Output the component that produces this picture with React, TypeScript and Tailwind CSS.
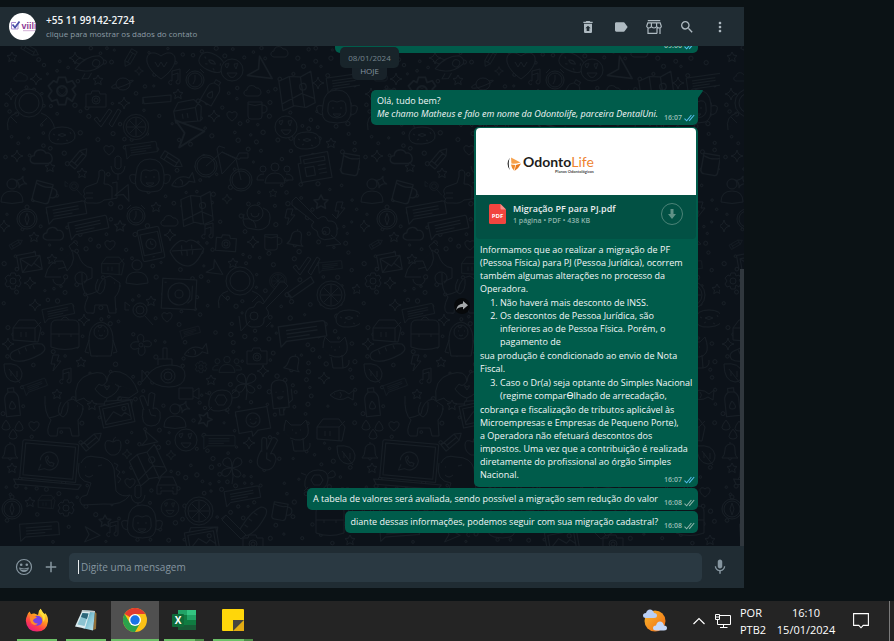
import React from 'react';
import { MdAdd, MdLabel, MdMic, MdMoreVert, MdRestoreFromTrash, MdSearch } from 'react-icons/md';

type Doodle = [kind: string, x: number, y: number, rotate?: number, scale?: number];

const shapes: Record<string, string> = {
  star: 'M0-5 1.6-1.8 5-1.4 2.5 1 3.2 4.6 0 2.8-3.2 4.6-2.5 1-5-1.4-1.6-1.8Z',
  spark: 'M0-6Q.8-.8 6 0 .8.8 0 6-.8.8-6 0-.8-.8 0-6Z',
  heart: 'M0 5C-9-1-4-7 0-3 4-7 9-1 0 5Z',
  bigHeart: 'M0 15C-24-2-13-18 0-8 13-18 24-2 0 15M-6-2l3 5 3-5 3 5 3-5',
  cloud: 'M-6 5C-11 4-9-1-6-1-6-6 1-7 3-3 8-4 10 4 5 5Z',
  planet: 'M-7 0a7 6 0 1 1 14 0a7 6 0 1 1-14 0M-7 0C-16 4-10 6 0 2S14-5 6-3',
  camera: 'M-10-6h5l1-3h7l1 3h6v13h-20ZM-4 0a4 4 0 1 0 8 0a4 4 0 1 0-8 0M-2 0a2 2 0 1 0 4 0a2 2 0 1 0-4 0',
  pencil: 'M-11-4H6l6 4-6 4H-11ZM-7-4v8M6-4v8M-7 0H6',
  bubble: 'M-19-7H18a2 2 0 0 1 2 2V6H-14l-5 4ZM-13-3H13M-13 0H13M-13 3H6',
  envelope: 'M-10-6H10V8H-10ZM-10-6 0 3 10-6M-10 8l7-7M10 8 3 1M-13 4v-14H6v4',
  laptop: 'M-26-22H26a2 2 0 0 1 2 2V16H-28V-20a2 2 0 0 1 2-2ZM-25-19H25V13H-25ZM-34 18H34l-3 5H-31ZM-9-3a9 9 0 1 1 5 8l-6 2 2-6M-4-6c1 6 4 8 8 8l1-3-3-1-1 1-3-3 1-2-1-2Z',
  phone: 'M-9-16H9a2 2 0 0 1 2 2V14a2 2 0 0 1-2 2H-9a-2 2 0 0 1-2-2V-14a-2 2 0 0 1 2-2ZM-9-11H9V10H-9ZM-5 0a5 5 0 1 0 10 0a5 5 0 1 0-10 0M0-3V0L2 1M-1 13h2',
  cup: 'M-8-7H6V7q0 3-3 3H-5q-3 0-3-3ZM6-4q5 0 5 4t-5 4M-8-5q7 3 14 0',
  bell: 'M-8 6Q-5 3-5-2T0-8 5-2 8 6ZM-2 6q2 4 4 0M0-8v-2',
  wheel: 'M-14 0a14 14 0 1 0 28 0a14 14 0 1 0-28 0M-11 0a11 11 0 1 0 22 0a11 11 0 1 0-22 0M0-10V10M-10 0H10M-7-7 7 7M7-7-7 7',
  compass: 'M-10 0a10 10 0 1 0 20 0a10 10 0 1 0-20 0M-8 0a8 8 0 1 0 16 0a8 8 0 1 0-16 0M0-6 2 0 0 6-2 0ZM-2-12a2 2 0 1 0 4 0a2 2 0 1 0-4 0',
  clock: 'M-9 0a9 9 0 1 0 18 0a9 9 0 1 0-18 0M-7 0a7 7 0 1 0 14 0a7 7 0 1 0-14 0M0-5V0L-2 4M-9-7l4-4M9-7 5-11',
  face: 'M-11 0a11 11 0 1 0 22 0a11 11 0 1 0-22 0M-6-3q-2-4 1-3 3-2 1 2l-1 2ZM3-3q-2-4 1-3 3-2 1 2L4-1ZM-5 3H5Q2 9-2 7Z',
  plane: 'M-8-7 8-1-6 8-3 0Z',
  bolt: 'M-3-8H3L1-2H5L-3 8-1 1H-5Z',
  drop: 'M0-5Q8 5 0 5T0-5',
  person: 'M-5-8a5 5 0 1 0 10 0a5 5 0 1 0-10 0M-11 10Q-11-1 0-1T11 10Q0 13-11 10Z',
  group: 'M-4-8a4 4 0 1 0 8 0a4 4 0 1 0-8 0M-10 8Q-9-2 0-2T10 8ZM-15-6a3 3 0 1 0 6 0a3 3 0 1 0-6 0M9-6a3 3 0 1 0 6 0a3 3 0 1 0-6 0M-11 5h-7q0-6 7-6M11 5h7q0-6-7-6',
  gear: 'M-2-8H2L3-5 6-6 8-3 6-1 8 2 6 6 3 4 2 8H-2L-3 5-6 6-8 3-6 0-8-3-5-6-3-5ZM-3 0a3 3 0 1 0 6 0a3 3 0 1 0-6 0',
  flower: 'M-2-3C-8-12 6-14 2-3 12-8 14 5 3 1 8 12-6 14-2 3-12 8-14-5-2-3M-2 0a2 2 0 1 0 4 0a2 2 0 1 0-4 0',
  bike: 'M-27 4a11 11 0 1 0 22 0a11 11 0 1 0-22 0M-25 4a9 9 0 1 0 18 0a9 9 0 1 0-18 0M8 18a11 11 0 1 0 22 0a11 11 0 1 0-22 0M10 18a9 9 0 1 0 18 0a9 9 0 1 0-18 0M-16 4 0-10 14-3 0 12-5-13-3-16 3-14M14-3l5 21M14-3l3-6h9v5h-8M0-10 16-3',
  scooter: 'M-23 13q4-18 18-16l4 10q12-12 2-25l5-4 4 4M4-14l6 4Q14 3 24 4v10l-9 4M-23 13h16M-15 15a6 6 0 1 0 12 0M7 14a6 6 0 1 0 12 0a6 6 0 1 0-12 0M-10 5l8-2',
  thumb: 'M-11-1 0-5Q3-12 2-17q5-3 6 3L7-4q4-1 8 3v12l-8 1Q3 16-4 15h-6q-4-2-1-4-4-2-1-5-3-3 1-7M-11 5h7M-11 10h7M15-5l5-1v16l-5 1',
  bottle: 'M-3-14h6v4q4 3 4 7v17H-7V-3q0-4 4-7ZM-3-10h6M0-1q6 8 0 8T0-1',
  box: 'M-13 9V-3l6-8H9l6 8-3 14ZM-13-3H9l6-6M9-3v14M-5 1v5M0 1v5',
  note: 'M-4 6a2 2 0 1 1 0-3v-10l8-2V4a2 2 0 1 1-2-2v-7l-6 2',
  fish: 'M-10 0Q0-9 9-1L14-5 13 5 8 2Q-1 8-10 0M-6-1h1M0-3q3 3 0 6',
  car: 'M-10 8V0l4-9H6l4 9v8H6V5H-6v3ZM-9-1H9M-7 2h2M5 2h2',
  apple: 'M0-5q8-5 8 3T2 8H-2Q-8 5-8-2T0-5M0-5q0-4 3-5',
  dino: 'M-19-12q4-9 15-6 15 0 18 12l2 22q6 7 14 4Q22 31 4 29l-22 1q-6-8 5-10l4-12q-16-2-12-20M-15-8h1M-2-9l4-1M-15 0q4 4 8 0M14-12l4 2-2 4 4 3-3 4 4 3-3 4',
  dog: 'M-20-22q-1 18 6 24-6 12-1 16h7l1-8H5l2 8h7l-1-16Q18-3 18-12L8-19Q-2-18-4-4-10-1-16 0M-4-16q-6 12 2 15Q4-4 3-16M12-12h1M17-9h2',
  monkey: 'M-14-4Q-13-19 0-19T14-4 8 13-8 13-14-4M-9-2q0-9 9-5 9-4 9 5 2 10-9 11-11-1-9-11M-4-2v2M4-2v2M-4 5q4 5 8 0ZM-14-3q-8-2-6 4t6 4M14-3q8-2 6 4t-6 4',
  bread: 'M-17 4Q-21-3-10-5 4-10 15-7q6 6-3 10Q-9 11-17 4M-9-4l1 4M-2-6l1 4M6-7l1 4',
  hands: 'M-31 16q-3-22 14-27Q-1-16 0-4q-4 7-8 3L-12 4q6 8 12 9L-2 19h-9q-10-2-12-6ZM31 7q-5-16-18-20Q1-16 0-4M8-1l4 3Q10 9 0 13M31 7l-9 6-9-1Q6 20-2 19M0 5q-5-7 0-3 5-4 0 3',
  map: 'M-15-12-5-15 5-13 15-17V12L6 15-4 12-15 15ZM-5-15V12M5-13V15M-15 9 4 2 15 8M3-4a3 3 0 1 0 6 0a3 3 0 1 0-6 0',
  lips: 'M-17-2Q-6-16 0-10 6-16 17-2 8 15 0 14-11 13-17-2M-15-2H15M-6-2l1 5M0-2v6M6-2 5 3M-5-7v4M5-7v4',
  picture: 'M-16-11H16V11H-16ZM-13-8H13V8H-13ZM-13 6-3-3 4 3 8 0l5 5M6-4a2 2 0 1 0 4 0a2 2 0 1 0-4 0M-11-11l2-4 27 4-2 6',
  turntable: 'M-17-15H17V15H-17ZM-11 0a11 11 0 1 0 22 0a11 11 0 1 0-22 0M-4 0a4 4 0 1 0 8 0a4 4 0 1 0-8 0M13-9v14l-4 4M-15-11h2',
  rose: 'M-9-4a8 8 0 1 0 16 0a8 8 0 1 0-16 0M-5-4a4 4 0 1 0 8 0M-12-3Q-16 12-3 12 8 15 13 7 17-6 7-9M-12 2Q-1 0 0 11',
  guitar: 'M-26-22l4-4 22 22Q7-10 10-2q9-1 9 8 1 10-7 10Q0 19-1 8-10 4-4-1L-26-18ZM4 8a4 4 0 1 0 8 0a4 4 0 1 0-8 0M13 12l10 9-15 2M14-9l5 5',
  news: 'M-13-13H15V13H-16V-6h3ZM-10-9H11V-5H-10ZM-10-1H-1V8H-10ZM3-1h8M3 3h8M3 7h8',
  astronaut: 'M-14-4a14 14 0 1 1 28 0a14 14 0 1 1-28 0M-10-4a10 10 0 1 1 20 0a10 10 0 1 1-20 0M-12 6q-12 3-9 17M12 6q12 4 14 17M-18 10l6 6M18 11l-6 6',
  rocket: 'M-14 13Q-12-5 2-13q8 0 8 6Q5 8-9 12ZM-9-1l-7 1-4 7 7-1M4 8v7l-6 4v-7M-1-4a4 4 0 1 0 8 0a4 4 0 1 0-8 0',
  donut: 'M-13 0Q-12-8 0-8T13 0 0 9-13 0M-4 0q4-3 8 0-4 3-8 0M-9-1l2 1M8-3l1 2M-5 5l2-1M4 5l2 1',
  bag: 'M-14 13V-8q0-6 6-6H8q6 0 6 6V13Q0 18-14 13M-14 0H14M-4-14q4-6 8 0M-6 0v3M6 0v3',
  penguin: 'M-10 15Q-17-16 0-19 17-16 10 15ZM-7-9a7 7 0 1 0 14 0a7 7 0 1 0-14 0M-3-10h1M3-10h1M-2-6q2 2 4 0M-12-1l-4 12 4 1M12-1l4 12-4 1',
  submarine: 'M-19 2Q-12-9 4-9T19 2 3 13-19 2M-8-9v-6H6v6M-3-15v-11H1v11M-5 2a7 7 0 1 0 14 0a7 7 0 1 0-14 0M-2 2a4 4 0 1 0 8 0a4 4 0 1 0-8 0M-19 2l-5-6v12Z',
  peace: 'M-8-2q-3 17 8 17T9 1Q5-5 2-2L4-17q-4-3-6 0l-1 12-4-10q-5-1-4 3l4 11M-2-2 0 4l5 1',
  turtle: 'M-11 1Q-9-10 2-10T12 0-1 11-11 1M-5 0l3-5h6l3 5-3 5h-6ZM12-6q5-6 7-1t-7 5M-10-5l-5-2M-8 7l-4 4M6 9l3 5',
  ice: 'M-8 12V-8q0-8 8-8t8 8V12ZM-2 12v7h4v-7M-4-4h1M3-4h1M-3 1H3Q0 5-3 1M8 8l4-3V-6',
  cat: 'M-12-2q0-6 2-11l5 5H5l5-5q4 11 1 16-5 7-17 2M-4-3h1M4-3h1M-1 0h2M-4 7-2 18H8L7 5M8 18q7-1 6-8',
  clover: 'M0 0Q-13-2-8-9 0-14 0 0 2-14 9-9 13-2 0 0 13 4 7 9 0 10 0 0-4 12-10 7-12 0 0 0M0 0Q2 9 0 16',
  video: 'M-9-5H5V6H-9ZM5-1l6-4V6L5 3',
  ticket: 'M-16-11H16V11H3L-3 16V11H-16ZM-7 0a7 7 0 1 0 14 0a7 7 0 1 0-14 0M-3-1h1M3-1h1M-3 2Q0 6 3 2',
  magnifier: 'M-7-3a7 7 0 1 0 14 0a7 7 0 1 0-14 0M-4-3a4 4 0 1 0 8 0a4 4 0 1 0-8 0M5 3l8 9M-10-7l-5-4v8h4',
  ticks: 'M-12 1l3-2 3 5L3-9l3 2L-5 9ZM3 6l9-15 3 2L6 9Z',
  leaf: 'M-9-9Q7-11 9 0q0 9-7 9Q-9 8-9-9M-4-4l11 14M-2 3v-5M4 4V-2',
  mic: 'M-3-10q3-4 6 0v9q-3 4-6 0ZM-7-2q1 8 7 8t7-8M0 6v6',
  milk: 'M-12 3 8-17l4 5-19 19ZM-12 3l4 5',
};

const doodles: Doodle[] = [
  ['star', 12, 57], ['pencil', 30, 50, 30, 0.8], ['rocket', 92, 65, 30, 0.9], ['pencil', 130, 58, 120, 0.8], ['bigHeart', 161, 64],
  ['donut', 212, 62, 30], ['face', 232, 70], ['plane', 262, 72, 40, 1.5], ['cloud', 280, 52], ['spark', 75, 58], ['cloud', 21, 77, 0, 0.8],
  ['spark', 36, 79], ['gear', 62, 91, 0, 1.7], ['heart', 62, 91, 0, 0.8], ['star', 98, 80], ['planet', 123, 84], ['note', 176, 78], ['clock', 195, 80],
  ['bottle', 212, 92, 30, 0.9], ['spark', 139, 71, 0, 0.7], ['cloud', 253, 91], ['camera', 96, 100], ['spark', 11, 94], ['astronaut', 29, 107],
  ['milk', 154, 103, 40], ['star', 178, 94], ['spark', 124, 103], ['box', 187, 112, -10], ['cup', 256, 109], ['face', 286, 127],
  ['ticks', 106, 118], ['spark', 214, 116], ['wheel', 136, 127, 0, 0.9], ['heart', 232, 116], ['donut', 62, 135], ['plane', 190, 133, 0, 1.8],
  ['map', 297, 92, -8, 1.1], ['bubble', 344, 82, -8, 0.9], ['spark', 318, 83], ['monkey', 337, 109], ['donut', 307, 140], ['star', 331, 143],
  ['cloud', 42, 157, 0, 1.3], ['heart', 109, 150], ['bubble', 141, 149, -8, 0.8], ['spark', 17, 156], ['pencil', 79, 158, -50], ['star', 50, 167], ['star', 82, 173],
  ['mic', 118, 168], ['pencil', 172, 160, 32], ['monkey', 150, 178], ['bike', 222, 162], ['group', 275, 175], ['news', 315, 167, -10], ['cup', 352, 163, 10, 1.2],
  ['thumb', 97, 188], ['person', 12, 192], ['spark', 21, 182, 20], ['cup', 44, 191, 15, 1.2], ['magnifier', 74, 188, 0, 0.6], ['plane', 125, 192, -60],
  ['bubble', 66, 211, -10], ['bubble', 88, 226, -12], ['fish', 181, 182, -20], ['map', 197, 210, -6], ['spark', 227, 199, 0, 0.8], ['star', 273, 193, 0, 0.8],
  ['compass', 27, 219], ['clock', 136, 216], ['star', 156, 207], ['star', 120, 226, 0, 1.1], ['cloud', 170, 221], ['rose', 256, 217], ['star', 321, 202, 0, 1.4], ['guitar', 318, 223],
  ['bolt', 290, 217], ['bolt', 340, 210], ['spark', 4, 226], ['star', 34, 237], ['cloud', 54, 234, 0, 1.2], ['pencil', 16, 244, -30, 0.6], ['phone', 151, 244, -12], ['spark', 170, 235],
  ['lips', 187, 252, -4], ['note', 209, 232], ['camera', 226, 244, 4], ['spark', 253, 242], ['cup', 272, 241, 0, 0.9], ['bell', 296, 239, 10], ['heart', 110, 245],
  ['scooter', 68, 264], ['envelope', 31, 263, -10], ['star', 52, 259], ['box', 112, 266, 0, 0.8], ['person', 137, 273], ['plane', 216, 270, 40], ['star', 233, 263],
  ['gear', 13, 281], ['spark', 30, 283], ['turntable', 179, 294, 3], ['astronaut', 240, 285], ['wheel', 278, 281, 0, 0.6], ['ticks', 305, 266], ['bubble', 330, 266, -6, 0.6],
  ['milk', 300, 292, 10], ['person', 331, 295], ['wheel', 331, 295, 0, 1], ['dog', 102, 295], ['magnifier', 140, 313], ['star', 151, 301], ['spark', 35, 305],
  ['bubble', 58, 312, -12, 0.8], ['spark', 84, 320], ['guitar', 262, 308, 90], ['heart', 167, 317], ['star', 357, 289], ['donut', 349, 318],
  ['box', 26, 331], ['bag', 65, 334], ['penguin', 101, 341], ['flower', 141, 345], ['spark', 8, 344], ['bread', 28, 353, -8], ['bolt', 56, 363], ['star', 81, 362],
  ['leaf', 13, 373], ['note', 67, 377], ['bubble', 35, 386, -20, 0.6], ['star', 57, 394], ['bottle', 12, 402, -6], ['hands', 107, 385], ['bubble', 190, 332, -15, 0.5],
  ['fish', 194, 352, -15], ['submarine', 166, 374], ['gear', 201, 367, 0, 0.7], ['group', 227, 366, 0, 0.8], ['camera', 257, 357], ['star', 211, 380], ['video', 188, 393],
  ['bell', 293, 364, 15], ['spark', 263, 371], ['clover', 246, 384], ['ice', 280, 396, -6], ['bubble', 302, 332, -8, 1.2], ['turtle', 220, 400],
  ['dog', 65, 418], ['drop', 6, 425], ['drop', 19, 426], ['heart', 34, 426], ['star', 92, 405], ['picture', 117, 414, -12], ['peace', 151, 411], ['person', 175, 417],
  ['spark', 184, 407, 20], ['star', 205, 419, 20, 1.4], ['ticket', 253, 420, -10], ['cat', 296, 433], ['drop', 13, 434], ['pencil', 92, 441, -40], ['apple', 113, 447],
  ['plane', 150, 440, 20], ['face', 186, 440], ['bubble', 219, 441, 0, 0.8], ['spark', 249, 443], ['peace', 268, 455, 20], ['bell', 10, 452], ['star', 12, 468],
  ['laptop', 49, 464, 5], ['dino', 100, 475], ['spark', 127, 454, 0, 0.8], ['map', 148, 466, -25], ['spark', 171, 455, 0, 0.8], ['heart', 130, 483], ['clover', 232, 468],
  ['car', 167, 486], ['compass', 12, 509], ['star', 30, 502], ['gear', 66, 508], ['box', 46, 502, 0, 0.6], ['mic', 138, 497], ['wheel', 199, 511], ['bubble', 242, 495, -10, 0.9],
  ['cup', 281, 510, 10], ['face', 170, 508, 0, 0.8], ['monkey', 142, 524], ['star', 105, 521, 0, 1.2], ['bubble', 39, 530, -4], ['plane', 92, 535, 10], ['note', 114, 530],
  ['bread', 254, 522, -40], ['milk', 229, 527, 90], ['picture', 202, 541, -10], ['camera', 253, 544], ['cat', 335, 350], ['spark', 324, 378], ['fish', 340, 395],
  ['box', 330, 430], ['leaf', 346, 455], ['turtle', 316, 480], ['heart', 345, 492], ['bag', 330, 520], ['star', 350, 540],
];

// small circles fill whatever room the drawings leave
const dots = (() => {
  const out: { x: number; y: number; r: number }[] = [];
  let seed = 7;
  const next = () => {
    seed = (seed * 16807) % 2147483647;
    return seed / 2147483647;
  };
  for (let i = 0; i < 1500; i++) {
    const x = 3 + next() * 354;
    const y = 48 + next() * 496;
    const far = doodles.every(([, dx, dy]) => Math.hypot(dx - x, dy - y) > 11);
    const free = out.every((d) => Math.hypot(d.x - x, d.y - y) > 7);
    if (far && free) out.push({ x, y, r: 1 + next() * 1.2 });
  }
  return out;
})();

function Wallpaper() {
  return (
    <svg className="absolute inset-0 h-full w-full" aria-hidden="true">
      <defs>
        <pattern id="doodles" width="360" height="500" patternUnits="userSpaceOnUse">
          <g transform="translate(0 -46)" fill="#0c1219" stroke="#171e25" strokeWidth="1" strokeLinejoin="round">
            {dots.map((d, i) => (
              <circle key={i} cx={d.x} cy={d.y} r={d.r} />
            ))}
            {doodles.map(([kind, x, y, rotate = 0, scale = 1], i) => (
              <path key={i} d={shapes[kind]} transform={`translate(${x} ${y}) rotate(${rotate}) scale(${scale})`} />
            ))}
          </g>
        </pattern>
      </defs>
      <rect width="100%" height="100%" fill="url(#doodles)" />
    </svg>
  );
}

function Ticks({ read }: { read?: boolean }) {
  return (
    <svg
      viewBox="0 0 11 8"
      className={`h-2 w-[11px] ${read ? 'text-[#53bdeb]' : 'text-[#8fb5ab]'}`}
      fill="none"
      stroke="currentColor"
      strokeWidth="1.1"
    >
      <path d="M.5 4.6 2.7 6.8 7.4 1M5.2 6.8 10.2 1" />
    </svg>
  );
}

function Stamp({ time, read }: { time: string; read?: boolean }) {
  return (
    <span className="flex items-center gap-[2px] text-[7px] font-semibold leading-[8px] text-[#99beb7]">
      {time}
      <Ticks read={read} />
    </span>
  );
}

function Bubble({ time, read, tail, children }: { time: string; read?: boolean; tail?: boolean; children: React.ReactNode }) {
  return (
    <div
      className={`relative flex items-end gap-[6px] bg-[#005c4b] pt-1 pr-[3px] pb-[3px] pl-[6px] ${
        tail ? 'rounded-b-[5px] rounded-tl-[5px]' : 'rounded-[5px]'
      }`}
    >
      <div className="pb-[2px]">{children}</div>
      <Stamp time={time} read={read} />
      {tail && (
        <svg viewBox="0 0 5 8" className="absolute top-0 left-full h-2 w-[5px]">
          <path d="M0 0H4.2Q5.4.4 4.6 1.4L0 8Z" fill="#005c4b" />
        </svg>
      )}
    </div>
  );
}

function OdontoLogo() {
  return (
    <div className="flex items-center gap-[1px] pl-[30px] pt-1">
      <svg viewBox="0 0 16 18" className="h-[18px] w-4">
        <path d="M3.600 3Q-.6 9 3.800 15 1.800 9 3.600 3Z" fill="#222" />
        <path d="M5 2.500 14.500 7.500Q9.500 9 5.400 8.600Z" fill="#f6a04a" />
        <path d="M15 8.500Q13 13 8.500 16L10 10Z" fill="#e8791c" />
        <path d="M5 9.500 9.300 10 8 15.500Q5.500 13 5 9.500Z" fill="#f28c2c" />
      </svg>
      <div className="flex flex-col items-end font-['Lato',sans-serif]">
        <div className="text-[14px] font-bold leading-[15px] text-[#1d1d1b]">
          Odonto<span className="font-normal text-[#ee8330]">Life</span>
        </div>
        <div className="text-[4px] font-bold leading-[5px] text-[#444]">Planos Odontológicos</div>
      </div>
    </div>
  );
}

function DocumentMessage() {
  return (
    <div className="relative w-[224px] rounded-[5px] bg-[#005c4b] pt-px pb-[6px]">
      <div className="mx-[2px] overflow-hidden rounded-[4px] bg-[#025144]">
        <div className="flex h-[67px] items-center bg-white">
          <OdontoLogo />
        </div>
        <div className="flex h-[44px] items-center gap-[7px] pr-[13px] pb-[6px] pl-[13px]">
          <svg viewBox="0 0 17 20" className="h-5 w-[17px] font-['Open_Sans',sans-serif]">
            <path d="M1.500 0H11.500L17 5.500V18.500Q17 20 15.500 20H1.500Q0 20 0 18.500V1.500Q0 0 1.500 0Z" fill="#f2453f" />
            <path d="M11.500 0 17 5.500H12.500Q11.500 5.500 11.500 4.500Z" fill="#f98e88" />
            <text x="8.5" y="14" textAnchor="middle" fontSize="6" fontWeight="700" fill="#fff">PDF</text>
          </svg>
          <div className="flex-1">
            <div className="text-[9px] font-semibold leading-[13px] text-[#e9edef]">Migração PF para PJ.pdf</div>
            <div className="pt-px text-[7px] font-semibold leading-[10px] text-[#8db5ac]">1 página • PDF • 438 KB</div>
          </div>
          <button aria-label="Baixar" className="flex h-[22px] w-[22px] items-center justify-center rounded-full border border-[#4b8377] text-[#5f9186]">
            <svg viewBox="0 0 10 10" className="h-[10px] w-[10px]" fill="currentColor">
              <path d="M3.500 0H6.500V5H9L5 10 1 5H3.500Z" />
            </svg>
          </button>
        </div>
      </div>
      <div className="flex flex-col gap-px pt-1 pr-1 pl-[6px] text-[9px] font-medium leading-[13px] text-[#f3f6f7]">
        <p>
          Informamos que ao realizar a migração de PF<br />(Pessoa Física) para PJ (Pessoa Jurídica), ocorrem<br />
          também algumas alterações no processo da<br />Operadora.
        </p>
        <ol className="list-decimal pl-5">
          <li>Não haverá mais desconto de INSS.</li>
          <li>Os descontos de Pessoa Jurídica, são<br />inferiores ao de Pessoa Física. Porém, o<br />pagamento de</li>
        </ol>
        <p>sua produção é condicionado ao envio de Nota<br />Fiscal.</p>
        <ol className="list-decimal pl-5 whitespace-nowrap" start={3}>
          <li>Caso o Dr(a) seja optante do Simples Nacional<br />(regime comparƟlhado de arrecadação,</li>
        </ol>
        <p>
          cobrança e fiscalização de tributos aplicável às<br />Microempresas e Empresas de Pequeno Porte),<br />
          a Operadora não efetuará descontos dos<br />impostos. Uma vez que a contribuição é realizada<br />
          diretamente do profissional ao órgão Simples<br />Nacional.
        </p>
      </div>
      <div className="absolute right-[3px] bottom-[3px]">
        <Stamp time="16:07" read />
      </div>
      <button aria-label="Encaminhar" className="absolute top-[171px] right-full mr-1 flex h-4 w-4 items-center justify-center rounded-full bg-[#07090b] text-[#a5a9ab]">
        <svg viewBox="0 0 12 10" className="h-[10px] w-3" fill="currentColor">
          <path d="M7 0 12 4.300 7 8.500V6Q2.500 5.800 0 9.300 1 3.200 7 2.600Z" />
        </svg>
      </button>
    </div>
  );
}

function Header() {
  return (
    <header className="flex h-[39px] items-center bg-[#202c33] pr-4 pl-[9px]">
      <svg viewBox="0 0 27 27" className="h-[27px] w-[27px] font-['Liberation_Sans',sans-serif]">
        <clipPath id="avatar"><circle cx="13.5" cy="13.5" r="13.5" /></clipPath>
        <g clipPath="url(#avatar)">
          <rect width="27" height="27" fill="#fff" />
          <path d="M9 10V16H2.500V9.500H7" fill="none" stroke="#a98bd0" strokeWidth="1" />
          <path d="M3.500 11.500 6 14.500 10.500 8.500" fill="none" stroke="#4a50a8" strokeWidth="1.8" />
          <text x="12.5" y="16" fontSize="9" fontWeight="700" fill="#8f3c97">viili</text>
          <path d="M14 17.700H26" stroke="#c69acb" strokeWidth=".8" />
        </g>
      </svg>
      <div className="ml-[10px] flex-1">
        <h1 className="text-[10px] font-semibold leading-[13px] text-[#f3f6f7]">+55 11 99142-2724</h1>
        <p className="text-[8px] leading-[13px] text-[#8c9ba4]">clique para mostrar os dados do contato</p>
      </div>
      <div className="flex items-center gap-[17px] text-[#aebac1]">
        <button aria-label="Apagar conversa"><MdRestoreFromTrash className="h-4 w-4" /></button>
        <button aria-label="Etiquetar"><MdLabel className="h-4 w-4" /></button>
        <button aria-label="Catálogo">
          <svg viewBox="0 0 16 16" className="h-4 w-4" fill="none" stroke="currentColor" strokeWidth="1.2">
            <path d="M1.800 1.600H14.200M1.800 3.800H14.200L15.300 7.300Q15 9 13.200 9T10.600 7.600Q10 9 8 9T5.400 7.600Q4.800 9 3 9T.7 7.300ZM5.400 4V7.400M10.600 4V7.400M2 9V14.400H11M14 9V15M11 9V14.400" />
          </svg>
        </button>
        <button aria-label="Pesquisar"><MdSearch className="h-4 w-4" /></button>
        <button aria-label="Mais opções"><MdMoreVert className="h-4 w-4" /></button>
      </div>
    </header>
  );
}

function Composer() {
  return (
    <footer className="flex h-[42px] items-center bg-[#202c33] pr-[15px] pl-[15px] text-[#8696a0]">
      <button aria-label="Emojis">
        <svg viewBox="0 0 18 18" className="h-[18px] w-[18px]" fill="currentColor">
          <circle cx="9" cy="9" r="7.500" fill="none" stroke="currentColor" strokeWidth="1.2" />
          <circle cx="6.2" cy="6.8" r="1.3" />
          <circle cx="11.8" cy="6.8" r="1.3" />
          <path d="M4 9.600Q9 11.200 14 9.600 13.200 14 9 14T4 9.600Z" />
          <path d="M5.500 11.200Q9 12.200 12.500 11.200" stroke="#202c33" strokeWidth=".7" fill="none" />
        </svg>
      </button>
      <button aria-label="Anexar" className="ml-[9px]"><MdAdd className="h-[18px] w-[18px]" /></button>
      <div className="ml-[9px] flex h-[29px] flex-1 items-center gap-[2px] rounded-[5px] bg-[#2a3942] pl-[9px]">
        <span className="h-[14px] w-px bg-[#e9edef]" />
        <input
          type="text"
          aria-label="Mensagem"
          placeholder="Digite uma mensagem"
          className="min-w-0 flex-1 bg-transparent text-[10px] text-[#d1d7db] outline-none placeholder:text-[#8696a0]"
        />
      </div>
      <button aria-label="Gravar áudio" className="ml-[9px]"><MdMic className="h-[18px] w-[18px]" /></button>
    </footer>
  );
}

function Chat() {
  return (
    <section className="flex flex-1 flex-col">
      <Header />
      <main className="relative h-[500px] overflow-hidden bg-[#0c1219]">
        <Wallpaper />
        <div className="relative flex h-full flex-col items-end justify-end gap-px pr-[46px] pb-[13px] text-[9px] font-medium leading-[13px] text-[#f3f6f7]">
          <div className="flex h-[22px] w-[363px] shrink-0 items-end justify-end rounded-[5px] bg-[#005c4b] pr-[3px] pb-[3px]">
            <Stamp time="09:00" read />
          </div>
          <div className="-mr-[46px] mt-[7px] mb-[9px] flex self-stretch justify-center pr-[5px]">
            <span className="rounded-[5px] bg-[#182229] px-2 py-[3px] text-[8px] text-[#8696a0]">HOJE</span>
          </div>
          <Bubble time="16:07" read tail>
            <p>Olá, tudo bem?</p>
            <p className="italic">Me chamo Matheus e falo em nome da Odontolife, parceira DentalUni.</p>
          </Bubble>
          <div className="mt-px"><DocumentMessage /></div>
          <Bubble time="16:08">A tabela de valores será avaliada, sendo possível a migração sem redução do valor</Bubble>
          <Bubble time="16:08">diante dessas informações, podemos seguir com sua migração cadastral?</Bubble>
        </div>
        <div className="absolute inset-x-0 top-px flex justify-center pr-[5px]">
          <span className="rounded-[5px] bg-[#18242a] px-2 py-1 text-[8px] leading-[13px] text-[#76858e]">08/01/2024</span>
        </div>
        <div className="absolute right-0 bottom-0 h-[277px] w-1 bg-[#30373d]" />
      </main>
      <Composer />
    </section>
  );
}

const FirefoxIcon = () => (
  <svg viewBox="0 0 24 24" className="h-6 w-6">
    <defs>
      <linearGradient id="fx" x1=".8" y1="0" x2=".2" y2="1">
        <stop offset="0" stopColor="#fff044" />
        <stop offset=".4" stopColor="#ff9a1f" />
        <stop offset=".7" stopColor="#ff3d4a" />
        <stop offset="1" stopColor="#e0168a" />
      </linearGradient>
    </defs>
    <path d="M2 8Q2.800 4.500 4.600 3.400L6 6.200Q7.500 5.400 9.500 5.600L13 7Q13 3 15.600.8 17 4 19.500 6L20.500 5.200Q23.500 9 23 13.400 21.800 23.400 12 23.600 1.400 23 .8 12.400.9 10 2 8Z" fill="url(#fx)" />
    <circle cx="12.3" cy="12.8" r="5" fill="#7542e5" />
    <path d="M5 8Q9 6.500 12 9.400L9.500 10.800 8 12Q8.500 15.800 13 15.400 9.500 18.500 6.300 15.200 4.500 12 5 8Z" fill="#ff8a2a" />
    <path d="M14.800 5Q18.700 8.500 18.300 14 22 9 18 4.800L15.600.8Q13.800 2.700 14.800 5Z" fill="#ffdf3a" />
  </svg>
);

const NotepadIcon = () => (
  <svg viewBox="0 0 24 24" className="h-6 w-6">
    <defs>
      <linearGradient id="np" x1="0" y1="0" x2="1" y2="1">
        <stop offset="0" stopColor="#2f7186" />
        <stop offset=".5" stopColor="#7fc3d4" />
        <stop offset="1" stopColor="#c4e6ee" />
      </linearGradient>
    </defs>
    <path d="M21 4 22.500 5.500 22 21 19 22Z" fill="#927038" />
    <path d="M9 2 21 3 19 22.500 8 20Z" fill="url(#np)" />
    <path d="M8 3 1 18.500 11 20.500 16 4Z" fill="#dcecf0" />
    <path d="M8.500 5 3.500 16.500 10.500 18 14.500 5.500Z" fill="#8cc3d1" />
    <path d="M8.500 5 7 9 13 11 14.500 5.500Z" fill="#2c6679" />
    <path d="M8 2 21 3 20.800 4.600 7.600 3.600Z" fill="#c3c9c9" />
  </svg>
);

const ChromeIcon = () => (
  <svg viewBox="0 0 24 24" className="h-6 w-6">
    <circle cx="12" cy="12" r="12" fill="#fbc116" />
    <path d="M12 12 1.600 6A12 12 0 0 1 22.400 6H12Z" fill="#e33b2e" />
    <path d="M1.600 6A12 12 0 0 0 12 24L17.200 15 6.800 15Z" fill="#2ba24c" />
    <circle cx="12" cy="12" r="6" fill="#fff" />
    <circle cx="12" cy="12" r="4.7" fill="#1a73e8" />
  </svg>
);

const ExcelIcon = () => (
  <svg viewBox="0 0 24 24" className="h-6 w-6 font-['Open_Sans',sans-serif]">
    <path d="M6 2H15V7H6Z" fill="#21a366" />
    <path d="M15 2H24V7H15Z" fill="#33c481" />
    <path d="M6 7H15V17H6Z" fill="#107c41" />
    <path d="M15 7H24V12H15Z" fill="#21a366" />
    <path d="M15 12H24V17H15Z" fill="#107c41" />
    <path d="M6 17H24V22H6Z" fill="#185c37" />
    <rect y="6" width="12" height="13" rx="1" fill="#0f6b39" />
    <text x="6" y="16" textAnchor="middle" fontSize="10" fontWeight="700" fill="#fff">X</text>
  </svg>
);

const StickyIcon = () => (
  <svg viewBox="0 0 24 24" className="h-6 w-6">
    <rect x="1" y="1" width="22" height="22" rx="1" fill="#ffd60a" />
    <path d="M23 12V23H12Z" fill="#e3ac14" />
    <path d="M12 23V12H23Z" fill="#46443f" />
  </svg>
);

const WeatherIcon = () => (
  <svg viewBox="0 0 24 24" className="h-6 w-6">
    <defs>
      <linearGradient id="sun" x1="0" y1="0" x2="1" y2="1">
        <stop offset="0" stopColor="#fbb92d" />
        <stop offset="1" stopColor="#ee6a13" />
      </linearGradient>
    </defs>
    <circle cx="12" cy="12" r="10.500" fill="url(#sun)" />
    <path d="M3 9Q0 9 0 6.500T3 4Q4 .5 7 .5T11 4Q14 4 14 6.500T11 9Z" fill="#b9cff5" />
    <path d="M13 21.500Q10 21.500 10 19T13 16.500Q14 12.500 17 12.500T21 16.500Q24 16.500 24 19T21 21.500Z" fill="#c5d8f8" />
  </svg>
);

const apps = [
  { name: 'Firefox', icon: <FirefoxIcon /> },
  { name: 'Bloco de Notas', icon: <NotepadIcon /> },
  { name: 'Chrome', icon: <ChromeIcon />, active: true },
  { name: 'Excel', icon: <ExcelIcon />, stacked: true },
  { name: 'Notas Autoadesivas', icon: <StickyIcon />, stacked: true },
];

function Taskbar() {
  return (
    <nav className="flex h-10 items-center bg-[#242424] pl-[13px] text-white">
      <div className="flex h-full gap-px">
        {apps.map((app) => (
          <button
            key={app.name}
            aria-label={app.name}
            className={`flex w-12 flex-col items-center justify-between ${app.active ? 'bg-[#505050]' : ''}`}
          >
            <span className="flex flex-1 items-center">{app.icon}</span>
            <span className={`flex h-[2px] ${app.active ? 'w-full' : 'w-10'}`}>
              <span className="flex-1 bg-[#6cc067]" />
              {app.stacked && <span className="w-[9px] bg-[#4b8a48]" />}
            </span>
          </button>
        ))}
      </div>
      <div className="ml-auto flex h-full items-center">
        <button aria-label="Clima"><WeatherIcon /></button>
        <button aria-label="Ícones ocultos" className="ml-[26px]">
          <svg viewBox="0 0 12 8" className="h-2 w-3" fill="none" stroke="currentColor" strokeWidth="1.2">
            <path d="M.5 7 6 1.500 11.500 7" />
          </svg>
        </button>
        <button aria-label="Rede" className="ml-[10px]">
          <svg viewBox="0 0 16 14" className="h-[14px] w-4" fill="none" stroke="currentColor" strokeWidth="1">
            <path d="M5 1.500H15.500V10.500H2.500V6M8.500 10.500V13M5 13.500H12.500M.5.500H4.500V5.500H.5ZM.5 3H4.500" />
          </svg>
        </button>
        <div className="ml-[9px] w-[27px] text-[11px] leading-[17px]">POR<br />PTB2</div>
        <div className="ml-[9px] w-[60px] text-center text-[11px] leading-[17px]">16:10<br />15/01/2024</div>
        <button aria-label="Notificações" className="ml-[17px]">
          <svg viewBox="0 0 16 16" className="h-4 w-4" fill="none" stroke="currentColor" strokeWidth="1.1">
            <path d="M.6.600H15.400V12.400H10.200L8 14.800 5.800 12.400H.6Z" />
          </svg>
        </button>
        <div className="ml-5 h-full w-[5px] border-l border-[#7a7a7a]" />
      </div>
    </nav>
  );
}

export default function App() {
  return (
    <div className="flex min-h-screen flex-col justify-between bg-[#0b1215] pt-[7px] font-['Open_Sans','Noto_Sans',sans-serif]">
      <div className="flex pr-[150px]">
        <Chat />
      </div>
      <Taskbar />
    </div>
  );
}
